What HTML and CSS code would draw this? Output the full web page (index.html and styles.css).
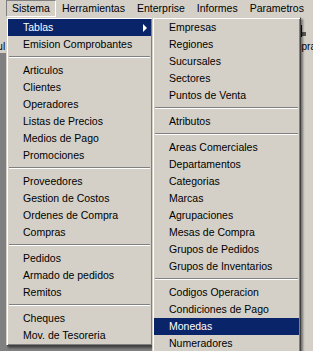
FILE: index.html
```html
<!DOCTYPE html>
<html lang="es">
<head>
  <meta charset="UTF-8" />
  <title>Sistema - Tablas</title>
  <link rel="stylesheet" href="styles.css">
</head>
<body>
  <div class="app">
    <div class="menubar">
      <span class="bar-item open">Sistema</span>
      <span class="bar-item">Herramientas</span>
      <span class="bar-item">Enterprise</span>
      <span class="bar-item">Informes</span>
      <span class="bar-item">Parametros</span>
    </div>

    <div class="toolbar">
      <div class="tool first">
        <svg width="16" height="14" viewBox="0 0 16 14"><rect x="2" y="1" width="10" height="9" fill="#222"/><rect x="4" y="3" width="6" height="5" fill="#d4d0c8"/><rect x="6" y="10" width="3" height="3" fill="#222"/></svg>
        <span>Consul</span>
      </div>
      <div class="tool last">
        <svg width="16" height="14" viewBox="0 0 16 14"><path d="M4 13 L7 1 L9 1 L9 13 Z" fill="#111"/><rect x="9" y="8" width="4" height="4" fill="#555"/></svg>
        <span>Compras</span>
      </div>
    </div>

    <div class="workspace">
      <div class="child-window"></div>
    </div>
  </div>

  <div class="menu main-menu">
    <div class="item active has-sub">Tablas</div>
    <div class="item">Emision Comprobantes</div>
    <div class="sep"></div>
    <div class="item">Articulos</div>
    <div class="item">Clientes</div>
    <div class="item">Operadores</div>
    <div class="item">Listas de Precios</div>
    <div class="item">Medios de Pago</div>
    <div class="item">Promociones</div>
    <div class="sep"></div>
    <div class="item">Proveedores</div>
    <div class="item">Gestion de Costos</div>
    <div class="item">Ordenes de Compra</div>
    <div class="item">Compras</div>
    <div class="sep"></div>
    <div class="item">Pedidos</div>
    <div class="item">Armado de pedidos</div>
    <div class="item">Remitos</div>
    <div class="sep"></div>
    <div class="item">Cheques</div>
    <div class="item">Mov. de Tesoreria</div>
  </div>

  <div class="menu sub-menu">
    <div class="item">Empresas</div>
    <div class="item">Regiones</div>
    <div class="item">Sucursales</div>
    <div class="item">Sectores</div>
    <div class="item">Puntos de Venta</div>
    <div class="sep"></div>
    <div class="item">Atributos</div>
    <div class="sep"></div>
    <div class="item">Areas Comerciales</div>
    <div class="item">Departamentos</div>
    <div class="item">Categorias</div>
    <div class="item">Marcas</div>
    <div class="item">Agrupaciones</div>
    <div class="item">Mesas de Compra</div>
    <div class="item">Grupos de Pedidos</div>
    <div class="item">Grupos de Inventarios</div>
    <div class="sep"></div>
    <div class="item">Codigos Operacion</div>
    <div class="item">Condiciones de Pago</div>
    <div class="item active">Monedas</div>
    <div class="item">Numeradores</div>
  </div>
</body>
</html>
```

FILE: styles.css
```css
body {
  margin: 0;
  width: 313px;
  height: 351px;
  overflow: hidden;
  position: relative;
  font-family: 'Liberation Sans', Arial, sans-serif;
  font-size: 10.5px;
  color: #000;
  background: #808080;
}

.app {
  display: flex;
  flex-direction: column;
  height: 351px;
}

.menubar {
  display: flex;
  height: 17px;
  padding-left: 6px;
  background: #d4d0c8;
}

.bar-item {
  line-height: 15px;
  padding: 0 5px;
  border: 1px solid transparent;
}

.bar-item.open {
  border-color: #808080 #fff #fff #808080;
}

.toolbar {
  display: flex;
  justify-content: space-between;
  height: 36px;
  background: #d4d0c8;
  overflow: hidden;
}

.tool {
  display: flex;
  flex-direction: column;
  align-items: center;
  padding-top: 7px;
  gap: 3px;
  font-size: 10px;
}

.tool.first {
  margin-left: -26px;
}

.tool.last {
  margin-right: -8px;
}

.workspace {
  flex: 1;
  display: flex;
  justify-content: flex-end;
  background: #808080;
}

.child-window {
  width: 120px;
  background: #d4d0c8;
}

.menu {
  position: absolute;
  top: 17px;
  box-sizing: border-box;
  padding: 1px;
  background: #d4d0c8;
  border: 1px solid;
  border-color: #d4d0c8 #404040 #404040 #d4d0c8;
  box-shadow: inset 1px 1px #fff, inset -1px -1px #808080, 2px 2px 2px rgba(0, 0, 0, 0.45);
}

.main-menu {
  left: 6px;
  width: 147px;
}

.sub-menu {
  left: 152px;
  width: 149px;
}

.item {
  position: relative;
  height: 17px;
  line-height: 17px;
  padding-left: 15px;
  white-space: nowrap;
}

.item.active {
  background: #0a246a;
  color: #fff;
}

.item.has-sub::after {
  content: "";
  position: absolute;
  right: 4px;
  top: 5px;
  border-left: 4px solid #fff;
  border-top: 4px solid transparent;
  border-bottom: 4px solid transparent;
}

.sep {
  height: 9px;
  padding-top: 3px;
  box-sizing: border-box;
}

.sep::before {
  content: "";
  display: block;
  margin: 0 1px;
  border-top: 1px solid #808080;
  border-bottom: 1px solid #fff;
}
```
